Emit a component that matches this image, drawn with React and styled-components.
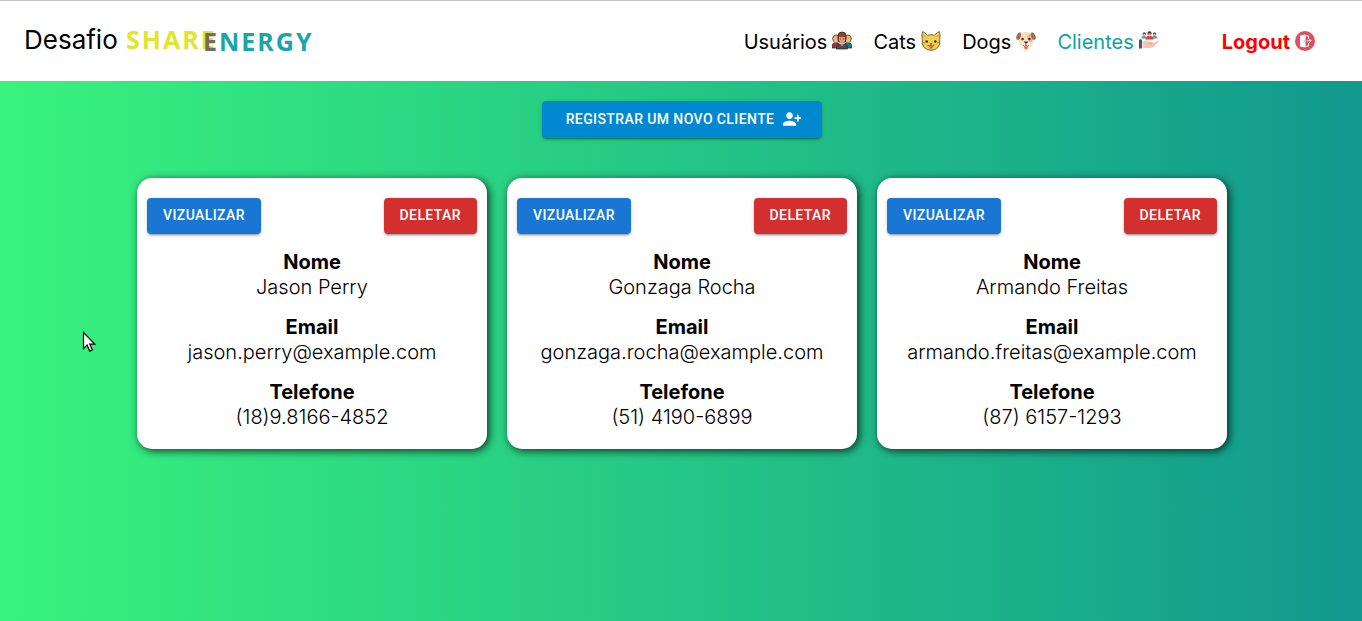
import React from "react";
import styled, { createGlobalStyle } from "styled-components";

const GlobalStyle = createGlobalStyle`
  * { box-sizing: border-box; }
  body {
    margin: 0;
    background: #ffffff;
    color: #000000;
    font-family: Inter, "Liberation Sans", sans-serif;
    font-size: 20px;
    line-height: 25px;
  }
`;

const Page = styled.div`
  display: flex;
  flex-direction: column;
  min-height: 100vh;
`;

const Header = styled.header`
  display: flex;
  align-items: center;
  justify-content: space-between;
  flex-wrap: wrap;
  min-height: 81px;
  padding: 0 47px 0 24px;
  border-top: 1px solid #c6c6c6;
  background: #ffffff;
`;

const Brand = styled.h1`
  display: flex;
  align-items: center;
  gap: 8px;
  margin: 0;
  padding-bottom: 2px;
  font-size: 26px;
  font-weight: 400;
  line-height: 32px;
`;

const Logo = styled.svg`
  width: 196px;
  height: 40px;
  overflow: visible;
  font: 700 25px "Open Sans", sans-serif;
  letter-spacing: 2px;
`;

const Nav = styled.nav`
  display: flex;
  align-items: center;
  gap: 21px;
  padding-top: 2px;
`;

const Icon = styled.svg`
  width: 20px;
  height: 20px;
  flex: none;
`;

const NavLink = styled.a`
  display: flex;
  align-items: center;
  gap: 5px;
  color: ${(p) => p.$color || "#000000"};
  font-weight: ${(p) => (p.$strong ? 700 : 400)};
  margin-left: ${(p) => (p.$strong ? "42px" : "0")};
  text-decoration: none;

  ${Icon} {
    margin-bottom: 2px;
  }
`;

const Main = styled.main`
  display: flex;
  flex: 1;
  flex-direction: column;
  align-items: center;
  gap: 40px;
  padding: 20px 0 20px 2px;
  background: linear-gradient(to right, #38f37d, #11998e);
`;

const Button = styled.button`
  display: inline-flex;
  align-items: center;
  justify-content: center;
  gap: 8px;
  min-height: ${(p) => (p.$wide ? "37px" : "36px")};
  padding: ${(p) => (p.$wide ? "5px 20px 7px 24px" : "5px 16px 7px")};
  border: 0;
  border-radius: 4px;
  background: ${(p) => p.$color};
  color: #ffffff;
  font: 500 14px/24px Roboto, "Liberation Sans", sans-serif;
  letter-spacing: 0.02857em;
  text-transform: uppercase;
  cursor: pointer;
  box-shadow: 0 3px 1px -2px rgba(0, 0, 0, 0.2), 0 2px 2px rgba(0, 0, 0, 0.14),
    0 1px 5px rgba(0, 0, 0, 0.12);
`;

const CardList = styled.section`
  display: flex;
  flex-wrap: wrap;
  justify-content: center;
  gap: 20px;
`;

const Card = styled.article`
  display: flex;
  flex-direction: column;
  gap: 16px;
  width: 350px;
  max-width: 100%;
  padding: 20px 10px 19px;
  border-radius: 15px;
  background: #ffffff;
  box-shadow: 2px 2px 8px rgba(0, 0, 0, 0.75);
`;

const Actions = styled.div`
  display: flex;
  justify-content: space-between;
`;

const Details = styled.dl`
  display: flex;
  flex-direction: column;
  gap: 15px;
  margin: 0;
  text-align: center;
`;

const Label = styled.dt`
  font-weight: 700;
`;

const Value = styled.dd`
  margin: 0;
  font-weight: 300;
`;

const Pointer = styled.svg`
  position: absolute;
  left: 82px;
  top: 331px;
  width: 14px;
  height: 22px;
  pointer-events: none;
`;

const UsersIcon = () => (
  <Icon viewBox="0 0 20 20" aria-hidden="true">
    <path d="M0 17v-3q1-2.5 4-2.5t4 3V17z" fill="#a8323a" stroke="#282828" strokeWidth=".7" />
    <path d="M12 17v-3q1-2.5 4-2.5t4 3V17z" fill="#187e8c" stroke="#282828" strokeWidth=".7" />
    <circle cx="4.2" cy="7.6" r="3.6" fill="#eeb74a" stroke="#4a3522" strokeWidth=".8" />
    <circle cx="15.8" cy="7.6" r="3.6" fill="#eeb74a" stroke="#4a3522" strokeWidth=".8" />
    <path d="M2 7.4h4v3q-2 2-4 0zM14 7.4h4v3q-2 2-4 0z" fill="#f4b59b" />
    <path d="M4.5 18v-2q0-3 5.5-3t5.5 3v2z" fill="#494c50" stroke="#222" strokeWidth=".7" />
    <path d="M6 8.5V5q0-4 4-4t4 4v3.5L13 11H7z" fill="#8a4634" stroke="#352119" strokeWidth=".8" />
    <path d="M7 6h6v3.5q-1 3-3 3t-3-3z" fill="#dc9a80" />
    <path d="M8 8h1m2 0h1" stroke="#33231d" strokeWidth=".8" />
    <path d="m8 13.3 2 2 2-2" fill="#dc9a80" />
  </Icon>
);

const CatIcon = () => (
  <Icon viewBox="0 0 20 20" aria-hidden="true">
    <path
      d="M1.5.7Q3 .4 6.5 4.2q3.5-1 7 0Q17 .4 18.5.7q1 2.3.2 7.8 1 5-2 8Q14 19.3 10 19.3t-6.7-2.8q-3-3-2-8Q.5 3 1.5.7z"
      fill="#f0d050" stroke="#66592b" strokeWidth=".9"
    />
    <path d="m2.5 3 2 2-1.5 2zm15 0-2 2 1.5 2z" fill="#dc9a68" />
    <path d="M1 11.5l3 .3m15-.3-3 .3" stroke="#94752c" strokeWidth=".8" />
    <circle cx="5.7" cy="10.5" r="1.2" fill="#2d2a24" />
    <circle cx="14.3" cy="10.5" r="1.2" fill="#2d2a24" />
    <path d="M8.7 12.3h2.6L10 13.8z" fill="#4c3027" />
    <path d="M6.5 14.3q2 1.5 3.5-.5 1.5 2 3.5.5" fill="none" stroke="#60431f" strokeWidth=".9" />
    <path d="M8.5 15.2h3v1.5q-1.5 2-3 0z" fill="#e64c45" />
  </Icon>
);

const DogIcon = () => (
  <Icon viewBox="0 0 20 20" aria-hidden="true">
    <path d="M4 2.5Q10-.5 16 2.5L17 11q-1 5-4 6-1 2.5-3 2.5T7 17q-3-1-4-6z" fill="#f6dcc0" />
    <path d="M11 5q2-3 5-2l1 6q-2 3-4 1.5-2-1.5-2-5.500z" fill="#e6bb8f" />
    <path d="M4.500 1.200Q2 1 .3 5.500q-.6 3 1.500 3.500 2.400 0 3.400-5zM15.500 1.200q2.500-.2 4.200 4.300.6 3-1.500 3.500-2.400 0-3.400-5z" fill="#a66b51" />
    <path d="M10 9q-4.500 2-4.500 5t3.500 3q1 1 2 0 3.500 0 3.500-3T10 9z" fill="#fff1df" />
    <circle cx="6.600" cy="8" r="1.200" fill="#3b302c" />
    <circle cx="13.400" cy="8" r="1.200" fill="#3b302c" />
    <path d="M7.700 10.500h4.600L10 13.300z" fill="#3b302c" />
    <path d="M10 13v1.500m-3 0q2 1.500 3 0 1 1.500 3 0" fill="none" stroke="#6b4c3c" strokeWidth=".8" />
    <path d="M8.300 15.300h3.400V17q-1.700 2.500-3.400 0z" fill="#ef6260" />
  </Icon>
);

const ClientsIcon = () => (
  <Icon viewBox="0 0 20 20" aria-hidden="true">
    <path d="M2.500 7.500q0-2.700 2.500-2.700t3 2.700zM13 7.500q0-2.700 2.700-2.700t2.700 2.700z" fill="#4aa0c8" />
    <circle cx="5.200" cy="3" r="1.700" fill="#6d504c" />
    <circle cx="15.600" cy="3" r="1.700" fill="#6d504c" />
    <path d="M4.300 3H6v1.600H4.300zm10.400 0h1.700v1.600h-1.700z" fill="#f2b99e" />
    <path d="M6.500 8.500q0-3.700 4-3.700t4 3.700z" fill="#e13d42" />
    <circle cx="10.500" cy="2.400" r="2.100" fill="#493633" />
    <path d="M9.300 2.600h2.400v1.900l-1.200 1-1.200-1z" fill="#f2b99e" />
    <path d="M4 10.500q4-2 6 .5h3q1 1-.5 1.500H14l4.500-3q1.800 0 .8 1.500L15 15.500q-2 1.500-5 1.500H4z" fill="#f6c3b0" />
    <path d="M9 12.600h4.500q1-.5.3-1.300" fill="none" stroke="#d39684" strokeWidth=".7" />
    <path d="M3 9.500h1.500V17H3z" fill="#dfe6ea" />
    <path d="M0 8.500h3v9H0z" fill="#43586c" />
  </Icon>
);

const LogoutIcon = () => (
  <Icon viewBox="0 0 20 20" aria-hidden="true">
    <circle cx="10" cy="10" r="10" fill="#e04f5f" />
    <path d="m5 4.500 5.500-1v13L5 15.500z" fill="#fff" />
    <path d="M10 4.800h3.500v3M13.500 12v3.200H10" fill="none" stroke="#fff" strokeWidth="1" />
    <path d="M11.500 9.800H16m-1.800-2 2 2-2 2" fill="none" stroke="#fff" strokeWidth=".9" />
    <circle cx="9.200" cy="10" r=".6" fill="#e04f5f" />
  </Icon>
);

const PersonAddIcon = () => (
  <Icon viewBox="0 0 24 24" fill="currentColor" aria-hidden="true">
    <path d="M13 8c0-2.210-1.790-4-4-4S5 5.790 5 8s1.790 4 4 4 4-1.790 4-4zm2 2v2h3v3h2v-3h3v-2h-3V7h-2v3h-3zM1 18v2h16v-2c0-2.660-5.330-4-8-4s-8 1.340-8 4z" />
  </Icon>
);

const links = [
  { text: "Usuários", icon: UsersIcon },
  { text: "Cats", icon: CatIcon },
  { text: "Dogs", icon: DogIcon },
  { text: "Clientes", icon: ClientsIcon, color: "#0ba3a5" },
  { text: "Logout", icon: LogoutIcon, color: "#ff0000", strong: true },
];

const clients = [
  { Nome: "Jason Perry", Email: "jason.perry@example.com", Telefone: "(18)9.8166-4852" },
  { Nome: "Gonzaga Rocha", Email: "gonzaga.rocha@example.com", Telefone: "(51) 4190-6899" },
  { Nome: "Armando Freitas", Email: "armando.freitas@example.com", Telefone: "(87) 6157-1293" },
];

export default function App() {
  return (
    <Page>
      <GlobalStyle />
      <Header>
        <Brand>
          Desafio
          <Logo viewBox="0 0 196 40" role="img" aria-label="SHARENERGY">
            <text x="0" y="29" fill="#dfe62b">SHARE</text>
            <text x="77" y="31" fill="#1aa5a8">
              <tspan fill="#766b62">E</tspan>NERGY
            </text>
          </Logo>
        </Brand>
        <Nav>
          {links.map(({ text, icon: Glyph, color, strong }) => (
            <NavLink key={text} href="#" $color={color} $strong={strong}>
              {text}
              <Glyph />
            </NavLink>
          ))}
        </Nav>
      </Header>
      <Main>
        <Button type="button" $wide $color="#0288d1">
          Registrar um novo cliente
          <PersonAddIcon />
        </Button>
        <CardList>
          {clients.map((client) => (
            <Card key={client.Email}>
              <Actions>
                <Button type="button" $color="#1976d2">Vizualizar</Button>
                <Button type="button" $color="#d32f2f">Deletar</Button>
              </Actions>
              <Details>
                {Object.entries(client).map(([label, value]) => (
                  <div key={label}>
                    <Label>{label}</Label>
                    <Value>{value}</Value>
                  </div>
                ))}
              </Details>
            </Card>
          ))}
        </CardList>
      </Main>
      <Pointer viewBox="0 0 14 22" aria-hidden="true">
        <path d="M1.500 1.500v16l3.600-3.400 2.600 6 2.700-1.200-2.600-5.700h5z" fill="#fff" stroke="#000" strokeWidth="1.200" />
      </Pointer>
    </Page>
  );
}
